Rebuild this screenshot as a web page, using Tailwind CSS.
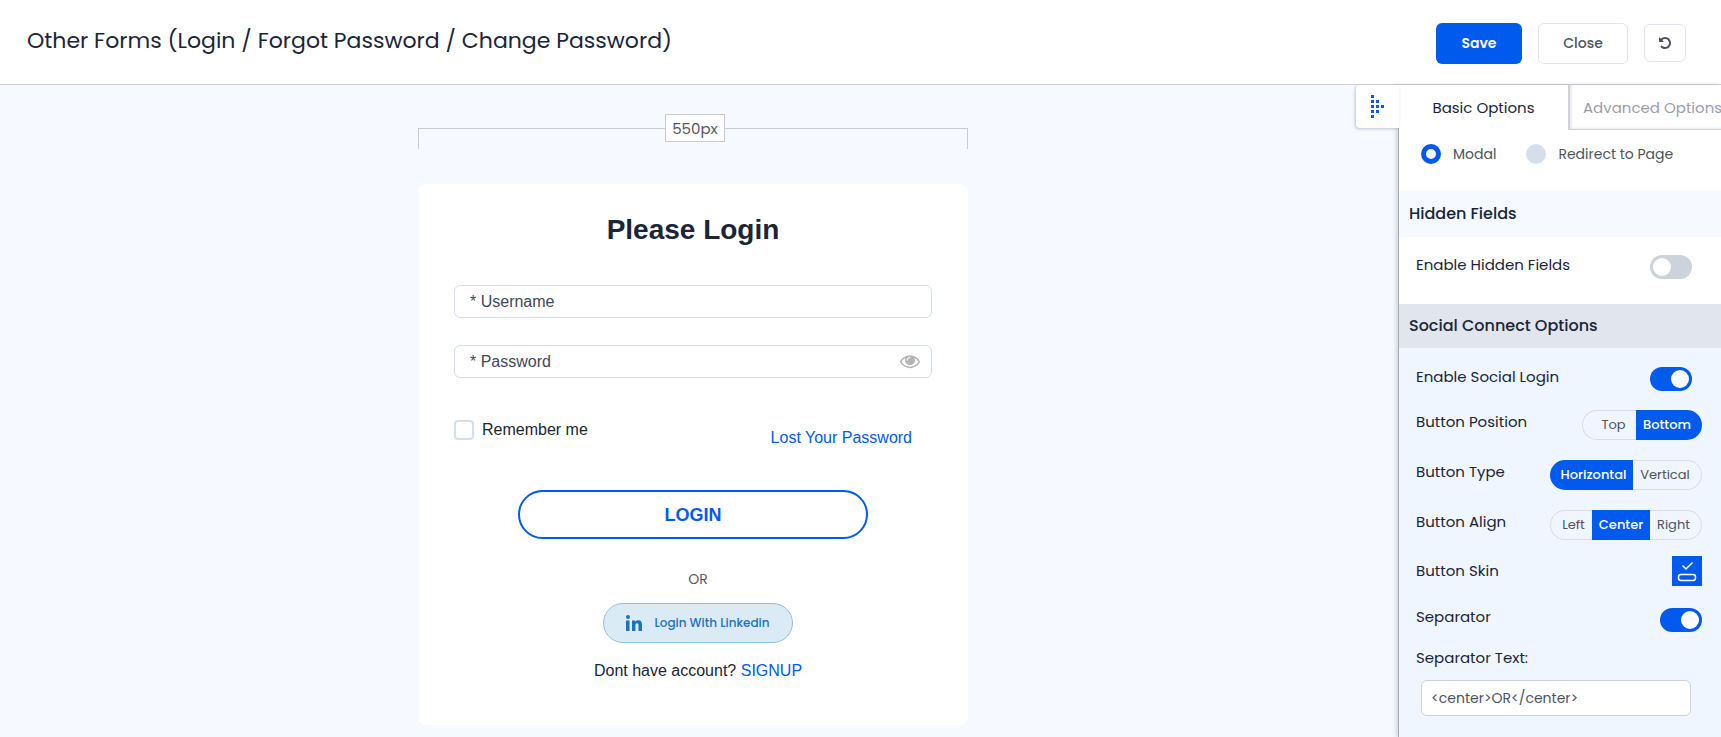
<!DOCTYPE html>
<html lang="en">
<head>
    <meta charset="UTF-8">
    <meta name="viewport" content="width=device-width, initial-scale=1.0">
    <script src="https://cdn.jsdelivr.net/npm/@tailwindcss/browser@4"></script>
    <title>Other Forms</title>
</head>
<body class="flex flex-col min-h-screen bg-[#f6f9ff] font-[Poppins,Inter,sans-serif] text-[#1a2538] overflow-x-hidden">

    <!--HEADER-->
    <header class="flex items-center justify-between h-[85px] pt-[2px] pl-[27px] pr-[35px] bg-white border-b border-[#ced0d8]">
        <h1 class="text-[22px] leading-8 pb-1">Other Forms (Login / Forgot Password / Change Password)</h1>
        <div class="flex items-center gap-4 text-sm font-medium">
            <button type="button" class="w-[86px] h-[41px] rounded-md bg-[#005aee] text-white font-semibold cursor-pointer">Save</button>
            <button type="button" class="w-[90px] h-[41px] rounded-md border border-[#e1e5ee] text-[#4d5360] cursor-pointer">Close</button>
            <button type="button" aria-label="Reset" class="flex items-center justify-center w-[42px] h-[38px] rounded-md border border-[#e1e5ee] text-[#4b4f5e] cursor-pointer">
                <svg viewBox="0 0 1792 1792" fill="currentColor" class="size-[14px]"><path d="M1664 896q0 156-61 298t-164 245-245 164-298 61q-172 0-327-72.5t-264-204.5q-7-10-6.5-22.5t8.5-20.5l137-138q10-9 25-9 16 2 23 12 73 95 179 147t225 52q104 0 198.5-40.5t163.5-109.5 109.5-163.5 40.5-198.5-40.5-198.5-109.5-163.5-163.5-109.5-198.5-40.5q-98 0-188 35.5t-160 101.5l137 138q31 30 14 69-17 40-59 40h-448q-26 0-45-19t-19-45v-448q0-42 40-59 39-17 69 14l130 129q107-101 244.5-156.5t284.5-55.5q156 0 298 61t245 164 164 245 61 298z"/></svg>
            </button>
        </div>
    </header>

    <div class="flex flex-1">

        <!--FORM PREVIEW-->
        <main class="flex flex-col items-center flex-1 pt-[29px] pr-3 pb-3">

            <!--Ruler-->
            <div class="flex items-start w-[550px]">
                <div class="w-[247px] h-[21px] mt-[14px] border-t border-l border-[#c9cacd]"></div>
                <span class="w-[60px] h-7 border border-[#c9cacd] bg-white text-center text-[15px] leading-7 text-[#55585f]">550px</span>
                <div class="flex-1 h-[21px] mt-[14px] border-t border-r border-[#c9cacd]"></div>
            </div>

            <form class="w-[550px] mt-[35px] px-9 pt-7 pb-[42px] rounded-lg bg-white font-['Liberation_Sans',Arial,sans-serif] text-base">
                <h2 class="text-center text-[28px] leading-9 font-bold">Please Login</h2>

                <input type="text" name="username" aria-label="Username" placeholder="* Username" class="block w-full h-[33px] mt-[37px] px-[15px] rounded-md border border-[#d3def0] placeholder:text-[#3e4857]">

                <div class="relative mt-[27px]">
                    <input type="password" name="password" aria-label="Password" placeholder="* Password" class="block w-full h-[33px] pl-[15px] pr-11 rounded-md border border-[#d3def0] placeholder:text-[#3e4857]">
                    <button type="button" aria-label="Show password" class="absolute right-3 top-[6px] text-[#b4b4b4] cursor-pointer">
                        <svg viewBox="0 0 1792 1792" fill="currentColor" class="size-5"><path d="M1664 960q-152-236-381-353 61 104 61 225 0 185-131.500 316.500t-316.500 131.500-316.500-131.500-131.500-316.500q0-121 61-225-229 117-381 353 133 205 333.500 326.500t434.500 121.500 434.500-121.500 333.500-326.500zm-720-384q0-20-14-34t-34-14q-125 0-214.500 89.500t-89.500 214.500q0 20 14 34t34 14 34-14 14-34q0-86 61-147t147-61q20 0 34-14t14-34zm848 384q0 34-20 69-140 230-376.500 368.500t-499.500 138.500-499.500-139-376.500-368q-20-35-20-69t20-69q140-229 376.500-368t499.500-139 499.500 139 376.500 368q20 35 20 69z"/></svg>
                    </button>
                </div>

                <div class="flex justify-between mt-10 pr-5">
                    <label class="flex items-center gap-2 h-6">
                        <input type="checkbox" name="remember" class="appearance-none size-5 rounded-sm border-2 border-[#d3def0] checked:bg-[#005aee]">
                        Remember me
                    </label>
                    <a href="#" class="mt-2 leading-6 text-[#005aee]">Lost Your Password</a>
                </div>

                <button type="submit" class="block w-[350px] h-[49px] mx-auto mt-10 rounded-full border-2 border-[#005aee] text-lg font-bold text-[#005aee] cursor-pointer">LOGIN</button>

                <div class="flex flex-col items-center pl-[10px] mt-7">
                    <p class="font-[Poppins,Inter,sans-serif] text-sm leading-6 text-[#55585f]">OR</p>
                    <button type="button" class="flex items-center justify-center gap-3 w-[190px] h-10 mt-3 rounded-full border border-[#93bfe0] bg-[#daebf6] font-[Poppins,Inter,sans-serif] text-xs font-medium text-[#1b72bd] cursor-pointer">
                        <svg viewBox="0 0 16 16" fill="currentColor" class="size-4"><circle cx="2" cy="2" r="2"/><path d="M0 5.500h3.500V16H0zM6 5.500h3.200v1.400c.6-1 1.700-1.700 3.100-1.700 2.800 0 3.700 1.800 3.700 4.500V16h-3.500v-5.500c0-1.400-.3-2.300-1.400-2.300-1.200 0-1.700.9-1.700 2.300V16H6z"/></svg>
                        Login With Linkedin
                    </button>
                    <p class="mt-4 leading-6">Dont have account? <a href="#" class="text-[#005aee]">SIGNUP</a></p>
                </div>
            </form>
        </main>

        <!--OPTIONS PANEL-->
        <aside class="relative w-[323px] shrink-0 flex flex-col border-l border-[#a9abb0] bg-white text-[15px] shadow-[-2px_0_4px_rgba(60,70,100,0.2)]">

            <button type="button" aria-label="Collapse panel" class="absolute -left-[43px] top-0 flex items-center justify-center w-[43px] h-[43px] rounded-l bg-white text-[#005aee] shadow-[-1px_1px_3px_rgba(60,70,100,0.3)] cursor-pointer">
                <svg viewBox="0 0 13 23" fill="currentColor" class="w-[13px] h-[23px]"><path d="M0 0h3v3H0zM0 5h3v3H0zM5 5h3v3H5zM0 10h3v3H0zM5 10h3v3H5zM10 10h3v3h-3zM0 15h3v3H0zM5 15h3v3H5zM0 20h3v3H0z"/></svg>
            </button>

            <nav class="flex h-[45px] overflow-hidden whitespace-nowrap">
                <button type="button" class="w-[169px] shrink-0 pt-[2px] cursor-pointer">Basic Options</button>
                <button type="button" class="flex-1 pt-[2px] pl-[13px] border-l-2 border-b border-[#d0d2d8] text-left text-[#9b9ea6] shadow-[inset_2px_-1px_2px_rgba(0,0,0,0.08)] cursor-pointer">Advanced Options</button>
            </nav>

            <div class="flex gap-[30px] h-[61px] pt-3 pl-[22px] text-sm text-[#4d5360]">
                <label class="flex items-center gap-3 h-6">
                    <input type="radio" name="open" checked class="appearance-none size-5 rounded-full bg-[#d6deeb] checked:bg-white checked:border-[5px] checked:border-[#005aee]">
                    Modal
                </label>
                <label class="flex items-center gap-3 h-6">
                    <input type="radio" name="open" class="appearance-none size-5 rounded-full bg-[#d6deeb] checked:bg-white checked:border-[5px] checked:border-[#005aee]">
                    Redirect to Page
                </label>
            </div>

            <h3 class="h-[46px] pl-[10px] leading-[45px] bg-[#f6f9ff] text-base font-medium">Hidden Fields</h3>

            <div class="flex justify-between h-[67px] pt-4 pl-[17px] pr-[29px]">
                <label for="hidden-fields" class="leading-6">Enable Hidden Fields</label>
                <input type="checkbox" id="hidden-fields" class="appearance-none w-[42px] h-6 mt-[2px] p-[3px] rounded-full bg-[#ccd3db] checked:bg-[#005aee] before:block before:size-[18px] before:rounded-full before:bg-white checked:before:ml-[18px]">
            </div>

            <h3 class="h-11 pl-[10px] leading-[44px] bg-[#e1e5ee] text-base font-medium">Social Connect Options</h3>

            <div class="flex flex-col flex-1 pt-[17px] pl-[17px] pr-[19px] pb-5 bg-[#eff6ff]">
                <div class="flex justify-between pr-[10px]">
                    <label for="social-login" class="leading-6">Enable Social Login</label>
                    <input type="checkbox" id="social-login" checked class="appearance-none w-[42px] h-6 mt-[2px] p-[3px] rounded-full bg-[#ccd3db] checked:bg-[#005aee] before:block before:size-[18px] before:rounded-full before:bg-white checked:before:ml-[18px]">
                </div>

                <div class="flex justify-between mt-[19px]">
                    <span class="leading-6">Button Position</span>
                    <div class="flex h-[30px] text-[13px] text-[#4d5360]">
                        <button type="button" class="w-[54px] pl-2 rounded-l-full border border-r-0 border-[#d9dce2] cursor-pointer">Top</button>
                        <button type="button" class="w-[66px] pr-1 rounded-r-full bg-[#005aee] text-white font-medium cursor-pointer">Bottom</button>
                    </div>
                </div>

                <div class="flex justify-between mt-5">
                    <span class="leading-6">Button Type</span>
                    <div class="flex h-[30px] text-[13px] text-[#4d5360]">
                        <button type="button" class="w-[83px] pl-1 rounded-l-full bg-[#005aee] text-white font-medium cursor-pointer">Horizontal</button>
                        <button type="button" class="w-[69px] pr-1 rounded-r-full border border-l-0 border-[#d9dce2] cursor-pointer">Vertical</button>
                    </div>
                </div>

                <div class="flex justify-between mt-5">
                    <span class="leading-6">Button Align</span>
                    <div class="flex h-[30px] text-[13px] text-[#4d5360]">
                        <button type="button" class="w-[42px] pl-1 rounded-l-full border border-r-0 border-[#d9dce2] cursor-pointer">Left</button>
                        <button type="button" class="w-[58px] bg-[#005aee] text-white font-medium cursor-pointer">Center</button>
                        <button type="button" class="w-[52px] pr-1 rounded-r-full border border-l-0 border-[#d9dce2] cursor-pointer">Right</button>
                    </div>
                </div>

                <div class="flex items-center justify-between mt-4">
                    <span class="leading-6">Button Skin</span>
                    <button type="button" aria-label="Button skin" class="size-[30px] bg-[#005aee] text-white cursor-pointer">
                        <svg viewBox="0 0 30 30" fill="none" stroke="currentColor" stroke-width="1.500" class="size-[30px]"><path d="M10.500 9.500l3.500 3.500 6.500-6.500"/><rect x="6.500" y="18.500" width="17" height="6" rx="2.500"/></svg>
                    </button>
                </div>

                <div class="flex justify-between mt-[19px]">
                    <label for="separator" class="leading-6">Separator</label>
                    <input type="checkbox" id="separator" checked class="appearance-none w-[42px] h-6 mt-[3px] p-[3px] rounded-full bg-[#ccd3db] checked:bg-[#005aee] before:block before:size-[18px] before:rounded-full before:bg-white checked:before:ml-[18px]">
                </div>

                <label for="separator-text" class="mt-[14px] leading-6">Separator Text:</label>
                <input type="text" id="separator-text" value="&lt;center&gt;OR&lt;/center&gt;" class="h-9 mt-[10px] ml-[5px] mr-[11px] px-[9px] rounded-md border border-[#cdd1d8] bg-white text-sm text-[#4d5360]">
            </div>
        </aside>
    </div>

</body>
</html>
